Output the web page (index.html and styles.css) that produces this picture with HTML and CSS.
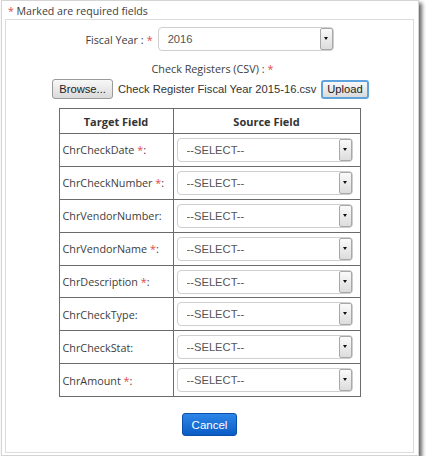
FILE: index.html
```html
<!DOCTYPE html>
<html lang="en">
<head>
    <meta charset="UTF-8">
    <title>Check Register Import</title>
    <link rel="stylesheet" href="styles.css">
</head>
<body>

<div class="frame">
    <div class="note"><span class="req">*</span> Marked are required fields</div>

    <div class="panel">
        <div class="fiscal-row">
            <label>Fiscal Year :<span class="req">*</span></label>
            <div class="select-box">
                <select><option>2016</option></select>
                <span class="arrow"></span>
            </div>
        </div>

        <div class="csv-label">Check Registers (CSV) :<span class="req">*</span></div>
        <div class="file-row">
            <button class="btn">Browse...</button>
            <span class="file-name">Check Register Fiscal Year 2015-16.csv</span>
            <button class="btn btn-focus">Upload</button>
        </div>

        <!-- field mapping -->
        <table class="map-table">
            <tr>
                <th class="col-target">Target Field</th>
                <th>Source Field</th>
            </tr>
            <tr>
                <td>ChrCheckDate <span class="req">*</span>:</td>
                <td><div class="select-box"><select><option>--SELECT--</option></select><span class="arrow"></span></div></td>
            </tr>
            <tr>
                <td>ChrCheckNumber <span class="req">*</span>:</td>
                <td><div class="select-box"><select><option>--SELECT--</option></select><span class="arrow"></span></div></td>
            </tr>
            <tr>
                <td>ChrVendorNumber:</td>
                <td><div class="select-box"><select><option>--SELECT--</option></select><span class="arrow"></span></div></td>
            </tr>
            <tr>
                <td>ChrVendorName <span class="req">*</span>:</td>
                <td><div class="select-box"><select><option>--SELECT--</option></select><span class="arrow"></span></div></td>
            </tr>
            <tr>
                <td>ChrDescription <span class="req">*</span>:</td>
                <td><div class="select-box"><select><option>--SELECT--</option></select><span class="arrow"></span></div></td>
            </tr>
            <tr>
                <td>ChrCheckType:</td>
                <td><div class="select-box"><select><option>--SELECT--</option></select><span class="arrow"></span></div></td>
            </tr>
            <tr>
                <td>ChrCheckStat:</td>
                <td><div class="select-box"><select><option>--SELECT--</option></select><span class="arrow"></span></div></td>
            </tr>
            <tr>
                <td>ChrAmount <span class="req">*</span>:</td>
                <td><div class="select-box"><select><option>--SELECT--</option></select><span class="arrow"></span></div></td>
            </tr>
        </table>

        <div class="actions">
            <button class="btn-primary">Cancel</button>
        </div>
    </div>
</div>

</body>
</html>
```

FILE: styles.css
```css
body {
    margin: 0;
    background: #fff;
    font-family: "Open Sans", Arial, sans-serif;
    font-size: 10.8px;
    color: #3d3d3d;
}
.frame {
    box-sizing: border-box;
    width: 418px;
    height: 456px;
    margin-left: 1px;
    padding: 0 4px 0 3px;
    border: 1px solid #d4d4d4;
    box-shadow: 3px 3px 4px #666;
}
.note {
    padding: 3px 0 0 3px;
    line-height: 15px;
    font-size: 10.6px;
}
.req {
    color: #e34a4a;
}
.panel {
    box-sizing: border-box;
    height: 434px;
    border: 1px solid #dcdcdc;
    padding-top: 7px;
}
.fiscal-row {
    display: flex;
    justify-content: center;
    align-items: center;
    gap: 5px;
}
.fiscal-row .req {
    margin-left: 3px;
}
.select-box {
    position: relative;
    width: 176px;
    height: 24px;
}
.select-box select {
    box-sizing: border-box;
    width: 100%;
    height: 100%;
    appearance: none;
    -webkit-appearance: none;
    border: 1px solid #cfcfcf;
    border-radius: 4px;
    background: #fff;
    padding: 0 0 0 9px;
    font-family: "Liberation Sans", Arial, sans-serif;
    font-size: 11.2px;
    color: #555;
}
.select-box .arrow {
    position: absolute;
    right: 1px;
    top: 1px;
    box-sizing: border-box;
    width: 13px;
    height: 22px;
    border: 1px solid #a8a8a8;
    border-radius: 2px;
    background: linear-gradient(#fafafa, #dcdcdc);
}
.select-box .arrow::after {
    content: "";
    position: absolute;
    left: 3px;
    top: 8px;
    border-left: 2.5px solid transparent;
    border-right: 2.5px solid transparent;
    border-top: 3px solid #111;
}
.csv-label {
    margin-top: 10px;
    padding-left: 6px;
    text-align: center;
    line-height: 16px;
}
.csv-label .req {
    margin-left: 3px;
}
.file-row {
    display: flex;
    justify-content: center;
    align-items: center;
    gap: 5px;
    margin-top: 2px;
    padding-left: 2px;
    font-family: "Liberation Sans", Arial, sans-serif;
    font-size: 11.2px;
    color: #333;
}
.btn {
    height: 20px;
    padding: 0 6px;
    border: 1px solid #9a9a9a;
    border-radius: 3px;
    background: linear-gradient(#f8f8f8, #dadada);
    font-family: "Liberation Sans", Arial, sans-serif;
    font-size: 11.2px;
    color: #222;
}
.btn-focus {
    height: 19px;
    border: 2px solid #5ea3dc;
    padding: 0 4px;
}
.map-table {
    margin: 9px auto 0;
    border-collapse: collapse;
    width: 302px;
}
.map-table th, .map-table td {
    border: 1px solid #6b6b6b;
    padding: 0;
    white-space: nowrap;
}
.map-table th {
    height: 24px;
    font-weight: bold;
    font-size: 11px;
    color: #333;
}
.map-table .col-target {
    width: 113px;
}
.map-table td {
    height: 31.9px;
}
.map-table td:first-child {
    padding-left: 3px;
}
.map-table td .select-box {
    margin-left: 3px;
}
.actions {
    display: flex;
    justify-content: center;
    margin-top: 16px;
}
.btn-primary {
    width: 55px;
    height: 23px;
    border: 1px solid #0a4fa8;
    border-radius: 3px;
    background: linear-gradient(#2d86e8, #0b5cc6);
    color: #fff;
    font-family: "Liberation Sans", Arial, sans-serif;
    font-size: 11.5px;
}
```
